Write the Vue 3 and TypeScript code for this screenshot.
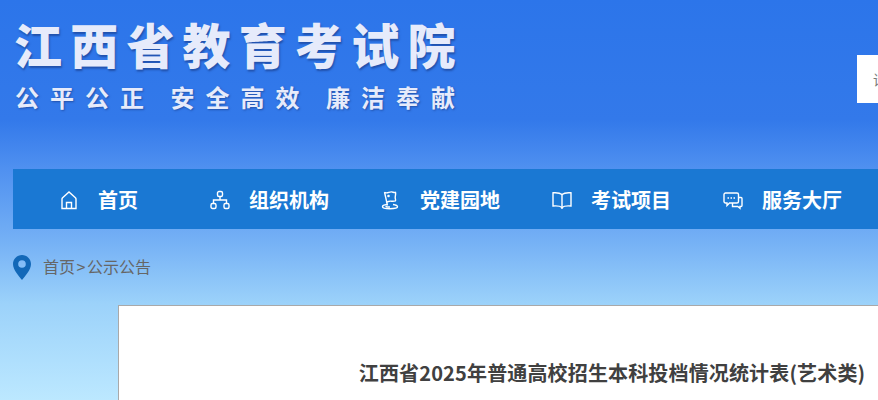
<template>
  <div class="viewport">
    <div class="page">
      <header class="top">
        <div class="logo">
          <div class="logo-name">江西省教育考试院</div>
          <div class="logo-motto">
            <span v-for="m in mottos" :key="m">{{ m }}</span>
          </div>
        </div>
        <div class="search">请输入关键字</div>
      </header>

      <nav class="nav">
        <a v-for="item in navItems" :key="item.label" class="nav-item">
          <svg class="nav-icon" viewBox="0 0 20 20" fill="none" stroke="#fff" stroke-width="1.4" v-html="item.icon"></svg>
          <span>{{ item.label }}</span>
        </a>
      </nav>

      <div class="crumb">
        <svg class="pin" viewBox="0 0 18 25">
          <path fill="#1268b8" fill-rule="evenodd" d="M9 0C4 0 0 4 0 9c0 6 6 12 9 16 3-4 9-10 9-16 0-5-4-9-9-9zm0 5.2a3.8 3.8 0 1 1 0 7.6 3.8 3.8 0 0 1 0-7.6z" />
        </svg>
        <span class="crumb-text">首页<i>&gt;</i>公示公告</span>
      </div>

      <main class="card">
        <h1 class="title">江西省2025年普通高校招生本科投档情况统计表(艺术类)</h1>
      </main>
    </div>
  </div>
</template>

<script setup lang="ts">
const mottos = ['公平公正', '安全高效', '廉洁奉献']

const navItems = [
  {
    label: '首页',
    icon: '<path d="M3 18.500V9c0-.5.2-.9.6-1.300L10 2l6.400 5.700c.4.400.6.800.6 1.300v9.500z"/><path d="M7.500 18.500v-6h5v6"/>',
  },
  {
    label: '组织机构',
    icon: '<rect x="7.500" y="1.500" width="5" height="5" rx="1.500"/><rect x="1" y="13.500" width="5" height="5" rx="1.500"/><rect x="14" y="13.500" width="5" height="5" rx="1.500"/><path d="M10 6.500V10M3.500 13.500V10h13v3.500"/>',
  },
  {
    label: '党建园地',
    icon: '<path d="M3.500 2.200 6.500 15.500"/><path d="M3.500 2.500c3 1.300 4.500-.8 7-.6 1.500.1 2.500.8 4 .5.500 2-.3 3.200-.3 5s.8 2.300.2 3.500c-2.500.8-4 0-6 .3-1 .1-2 .7-3.200 1.300"/><path d="M6 14.500c-2.500.3-4.500 1.100-4.500 2.200 0 1.300 3 2 7.500 2s7.500-.7 7.500-2c0-1-1.800-1.800-4.500-2.200"/><path d="M4.500 16.300c1 .6 3 .8 4.500.7"/><circle cx="7.500" cy="6" r=".6"/>',
  },
  {
    label: '考试项目',
    icon: '<path d="M10 4.500C8 2.800 4.500 2.500 1 2.800V16c3.500-.3 7-.2 9 1.500 2-1.700 5.500-1.800 9-1.500V2.800c-3.500-.3-7 0-9 1.700z"/><path d="M10 4.500v14.500"/>',
  },
  {
    label: '服务大厅',
    icon: '<path d="M2.500 3h11.500c.800 0 1.500.7 1.500 1.500v7c0 .8-.7 1.500-1.500 1.500H6.500L4 15.500V13H2.500C1.700 13 1 12.300 1 11.500v-7C1 3.700 1.700 3 2.500 3z"/><path d="M16 7.500h2c.6 0 1 .4 1 1v7c0 .6-.4 1-1 1h-1v1.800l-2.300-1.800H9.500V13"/><path d="M4.500 8h1.500M7.500 8h1.500M10.500 8h1.500" stroke-width="1.700"/>',
  },
]
</script>

<style>
html,
body {
  margin: 0;
  overflow: hidden;
}
</style>

<style scoped>
.viewport {
  width: 878px;
  height: 400px;
  overflow: hidden;
  background: linear-gradient(180deg, #2c75ea 0%, #3379ea 30%, #4f90f0 42%, #74b0f5 60%, #9cd2fa 76%, #bce8ff 100%);
  font-family: "Noto Sans CJK SC", "Liberation Sans", sans-serif;
}
.page {
  width: 1220px;
}
.top {
  height: 169px;
  display: flex;
  align-items: flex-start;
  justify-content: space-between;
  padding-left: 14px;
  box-sizing: border-box;
}
.logo {
  padding-top: 10px;
  width: 460px;
}
.logo-name {
  font-size: 48px;
  line-height: 66px;
  font-weight: 900;
  letter-spacing: 8.200px;
  white-space: nowrap;
  color: #e6ebfb;
  text-shadow: 1px 2px 2px rgba(20, 50, 120, .55);
}
.logo-motto {
  display: flex;
  gap: 15.500px;
  margin-top: 5px;
  margin-left: 1px;
  font-size: 24px;
  line-height: 32px;
  font-weight: 700;
  letter-spacing: 11px;
  white-space: nowrap;
  color: #e6ebfb;
  text-shadow: 1px 1px 2px rgba(20, 50, 120, .55);
}
.search {
  width: 363px;
  height: 48px;
  margin-top: 55px;
  background: #fff;
  padding-left: 16px;
  box-sizing: border-box;
  font-size: 14px;
  line-height: 48px;
  color: #777;
}
.nav {
  display: flex;
  height: 60px;
  margin-left: 13px;
  background: #1a78d3;
}
.nav-item {
  width: 171px;
  display: flex;
  align-items: center;
  justify-content: center;
  gap: 19px;
  color: #fff;
  font-size: 20px;
  font-weight: 700;
  white-space: nowrap;
}
.nav-icon {
  width: 20px;
  height: 20px;
  flex: none;
  margin-top: 2px;
}
.crumb {
  display: flex;
  align-items: center;
  gap: 12px;
  height: 76px;
  margin-left: 13px;
  font-size: 16px;
  color: #666;
}
.crumb-text {
  margin-top: -2px;
}
.crumb-text i {
  font-style: normal;
  padding: 0 1.500px;
}
.pin {
  width: 18px;
  height: 25px;
  flex: none;
}
.card {
  width: 988px;
  height: 200px;
  margin-left: 118px;
  box-sizing: border-box;
  background: #fff;
  border: 1px solid #a9a9a9;
  padding-top: 52px;
}
.title {
  margin: 0;
  text-align: center;
  font-size: 20px;
  line-height: 30px;
  font-weight: 700;
  letter-spacing: .15px;
  color: #404040;
  white-space: nowrap;
}
</style>
